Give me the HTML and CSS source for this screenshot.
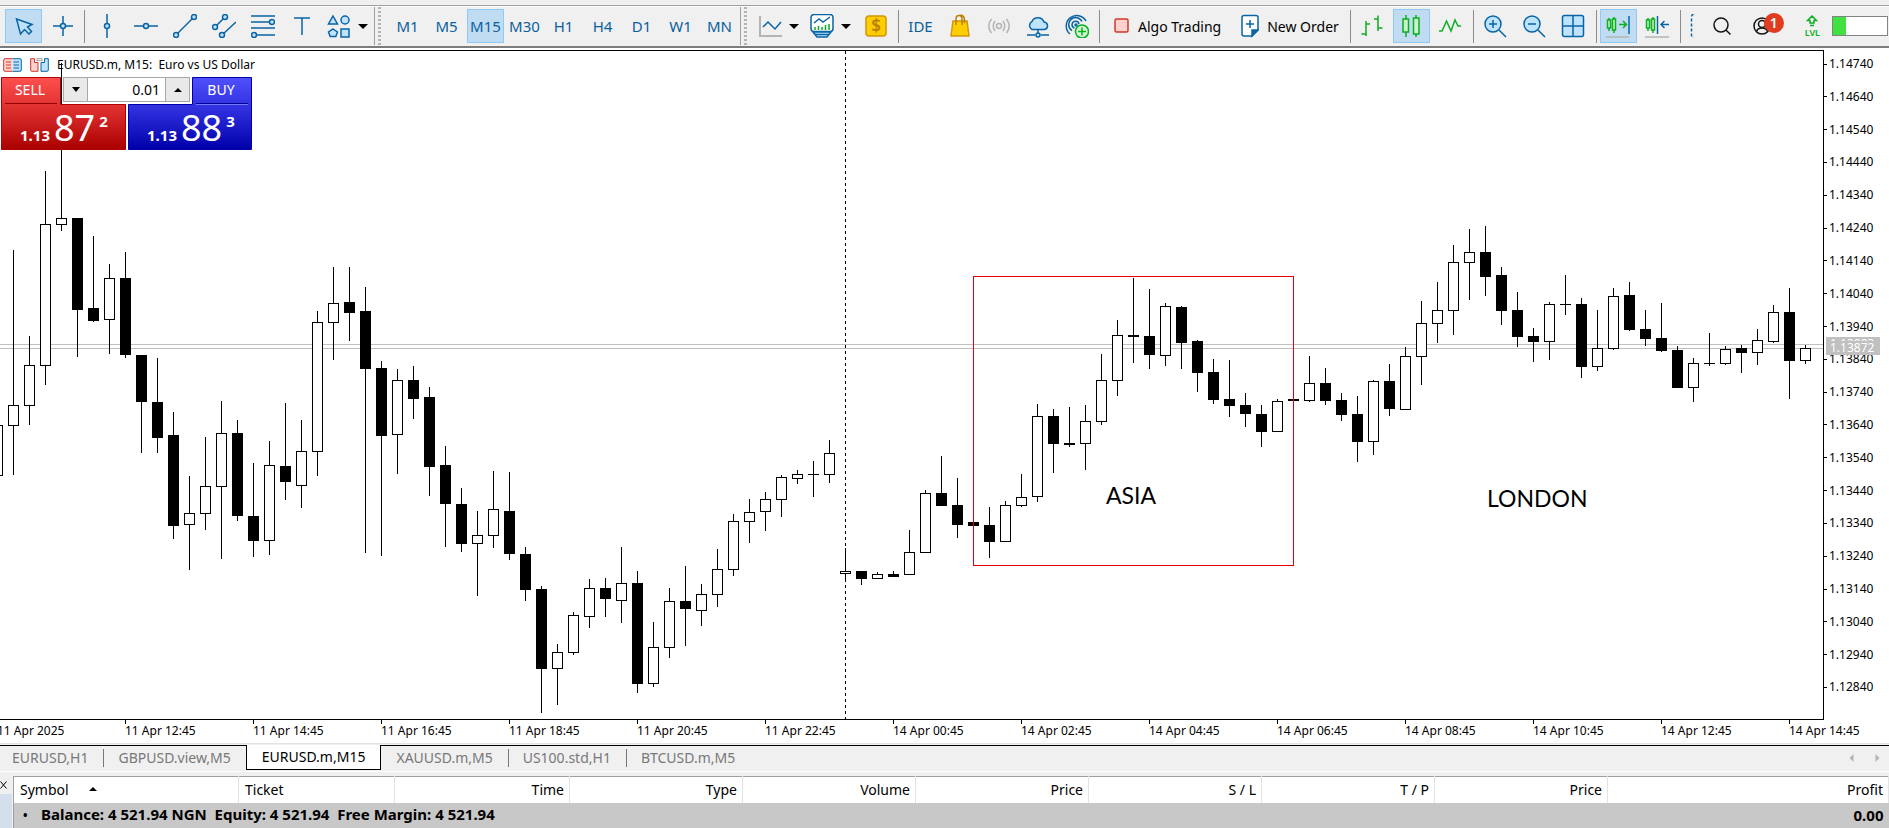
FILE: index.html
```html
<!DOCTYPE html>
<html lang="en">
<head>
  <meta charset="UTF-8">
  <meta name="viewport" content="width=device-width, initial-scale=1">
  <title>EURUSD.m, M15</title>
  <link rel="stylesheet" href="styles.css">
</head>
<body>
  <div class="menu-edge"></div>

  <!-- Toolbar -->
  <header class="toolbar">
    <div class="tool-group">
      <button class="tool active" aria-label="Cursor"><svg width="24" height="24" viewBox="0 0 24 24"><path class="fill" d="M4.500 5 L20 10.500 L15.500 13 L19.500 17.500 L17 20 L12.500 15.500 L8.500 20 Z"/></svg></button>
      <button class="tool" aria-label="Crosshair"><svg width="24" height="24" viewBox="0 0 24 24"><path d="M12 2V22M2 12H22"/><circle class="fill" cx="12" cy="12" r="2.500"/></svg></button>
      <span class="sep"></span>
      <button class="tool" aria-label="Vertical line"><svg width="24" height="24" viewBox="0 0 24 24"><path d="M12 0V24"/><circle class="fill" cx="12" cy="12" r="2.500"/></svg></button>
      <button class="tool" aria-label="Horizontal line"><svg width="24" height="24" viewBox="0 0 24 24"><path d="M0 12H24"/><circle class="fill" cx="12" cy="12" r="2.500"/></svg></button>
      <button class="tool" aria-label="Trend line"><svg width="24" height="24" viewBox="0 0 24 24"><path d="M3 21L21 3"/><circle class="fill" cx="3" cy="21" r="2.500"/><circle class="fill" cx="21" cy="3" r="2.500"/></svg></button>
      <button class="tool" aria-label="Channel"><svg width="24" height="24" viewBox="0 0 24 24"><path d="M3 13L13 3M10 21L24 8"/><circle class="fill" cx="3" cy="13" r="2.500"/><circle class="fill" cx="13" cy="3" r="2.500"/><circle class="fill" cx="10" cy="21" r="2.500"/></svg></button>
      <button class="tool" aria-label="Fibonacci"><svg width="24" height="24" viewBox="0 0 24 24"><path d="M0 2H24M0 8H18M0 14H24M6 21H24"/><circle class="fill" cx="21" cy="8" r="2.500"/><circle class="fill" cx="3" cy="21" r="2.500"/></svg></button>
      <button class="tool" aria-label="Text"><svg width="24" height="24" viewBox="0 0 24 24"><path d="M4 4H20M12 4V21"/></svg></button>
      <button class="tool drop" aria-label="Shapes">
        <svg width="24" height="24" viewBox="0 0 24 24"><path class="fill" d="M6 2L10.500 10H1.500Z"/><circle class="fill" cx="18" cy="6" r="4"/><path class="fill" d="M6 15L10.500 18L8.800 22.500H3.200L1.500 18Z"/><rect class="fill" x="14" y="15" width="8" height="8"/></svg>
        <span class="caret"></span>
      </button>
    </div>

    <div class="tool-group">
      <span class="grip"></span>
      <button class="tool">M1</button>
      <button class="tool">M5</button>
      <button class="tool active">M15</button>
      <button class="tool">M30</button>
      <button class="tool">H1</button>
      <button class="tool">H4</button>
      <button class="tool">D1</button>
      <button class="tool">W1</button>
      <button class="tool">MN</button>
    </div>

    <div class="tool-group last">
      <span class="grip"></span>
      <button class="tool drop" aria-label="Chart type">
        <svg width="24" height="24" viewBox="0 0 24 24"><path class="gray thick" d="M2 2V22H24"/><path d="M5 13L10 8L17 15L23 8"/></svg>
        <span class="caret"></span>
      </button>
      <button class="tool drop" aria-label="Indicators">
        <svg width="24" height="24" viewBox="0 0 24 24"><rect class="white" x="1" y="0.500" width="22" height="17" rx="3"/><path class="fill" d="M3 18H21L17 23H7Z"/><path d="M4 9L9 5L13 8L20 3M5 20.500H19"/><path class="green" d="M5 13V16M8.500 12V16M12 13V16M15.500 11V16M19 10V16"/></svg>
        <span class="caret"></span>
      </button>
      <button class="tool" aria-label="Symbols"><svg width="24" height="24" viewBox="0 0 24 24"><rect class="gold" x="2" y="2" width="20" height="20" rx="3"/><text class="dollar" x="12" y="18">$</text></svg></button>
      <span class="sep"></span>
      <button class="tool">IDE</button>
      <button class="tool" aria-label="Market"><svg width="24" height="24" viewBox="0 0 24 24"><path class="gold" d="M5 7H19L21 22H3Z"/><path class="gold-line" d="M8 11V5Q8 1.500 11 1.500Q14 1.500 14 5V11M11 1.500Q16.500 0.500 16.500 6V9"/></svg></button>
      <button class="tool" aria-label="Signals"><svg width="24" height="24" viewBox="0 0 24 24"><g class="gray"><circle cx="12" cy="12" r="2.500"/><path d="M8 7Q4.500 12 8 17M16 7Q19.500 12 16 17M4.500 5Q-1 12 4.500 19M19.500 5Q25 12 19.500 19"/></g></svg></button>
      <button class="tool" aria-label="VPS"><svg width="24" height="24" viewBox="0 0 24 24"><path class="fill" d="M6 15.500A4.500 4.500 0 0 1 6 7.500A6.500 6.500 0 0 1 18 8A3.800 3.800 0 0 1 18.500 15.500Z"/><path d="M12 16V20M1 21H9M15 21H23"/><circle class="fill" cx="12" cy="21" r="2"/></svg></button>
      <button class="tool" aria-label="Copy trading"><svg width="24" height="24" viewBox="0 0 24 24"><path d="M5 20A10.500 10.500 0 1 1 21 7M7 16.500A7 7 0 1 1 17 7.500M9.500 14A3.500 3.500 0 1 1 14 10"/><circle cx="11" cy="11" r="1"/><circle class="plus" cx="17" cy="17.500" r="6.500"/><path class="green" d="M17 13.500V21.500M13 17.500H21"/></svg></button>
      <span class="sep"></span>
      <button class="tool wide"><svg width="16" height="16" viewBox="0 0 16 16"><rect class="stop" x="1" y="1" width="13" height="13" rx="1.500"/></svg>Algo Trading</button>
      <button class="tool wide"><svg width="18" height="24" viewBox="0 0 18 24"><path class="white" d="M3 1.500H15Q17 1.500 17 3.500V16L11 22H3Q1 22 1 20V3.500Q1 1.500 3 1.500Z"/><path class="solid" d="M11 22V16H17Z"/><path d="M9 6V14M5 10H13"/></svg>New Order</button>
      <span class="sep"></span>
      <button class="tool" aria-label="Bar chart"><svg width="24" height="24" viewBox="0 0 24 24"><path class="green" d="M6 7V22M1.500 20H6M6 10H10M18 1.500V17M14 5H18M18 14H22.500"/></svg></button>
      <button class="tool active" aria-label="Candlesticks"><svg width="24" height="24" viewBox="0 0 24 24"><path class="green" d="M7 1V5M7 18V23M17 1V4M17 20V23"/><path class="green light" d="M4 5H9.500V18H4ZM14.500 4H20V20H14.500Z"/></svg></button>
      <button class="tool" aria-label="Line chart"><svg width="24" height="24" viewBox="0 0 24 24"><path class="green" d="M1 17H4L8.500 7L13 17L17 6L20 12H23"/></svg></button>
      <span class="sep"></span>
      <button class="tool" aria-label="Zoom in"><svg width="24" height="24" viewBox="0 0 24 24"><circle class="fill" cx="10" cy="10" r="8"/><path d="M16 16L23 23M10 6V14M6 10H14"/></svg></button>
      <button class="tool" aria-label="Zoom out"><svg width="24" height="24" viewBox="0 0 24 24"><circle class="fill" cx="10" cy="10" r="8"/><path d="M16 16L23 23M6 10H14"/></svg></button>
      <button class="tool" aria-label="Tile windows"><svg width="24" height="24" viewBox="0 0 24 24"><rect class="fill" x="1.500" y="1.500" width="21" height="21" rx="2"/><path d="M12 2V22M2 12H22"/></svg></button>
      <span class="sep"></span>
      <button class="tool active" aria-label="Auto scroll"><svg width="24" height="24" viewBox="0 0 24 24"><path class="green" d="M3 4V17M8 3V19M13 10.500H20M17 7L20.500 10.500L17 14"/><path class="green light" d="M1.500 6H4.500V14H1.500ZM6.500 5H9.500V16H6.500Z"/><path d="M23 2V20"/><path class="gray" d="M0 23H23"/></svg></button>
      <button class="tool" aria-label="Chart shift"><svg width="24" height="24" viewBox="0 0 24 24"><path class="green" d="M3 4V17M8 3V19"/><path class="green light" d="M1.500 6H4.500V14H1.500ZM6.500 5H9.500V16H6.500Z"/><path d="M12.500 2V20M16 10.500H24M19.500 7L16 10.500L19.500 14"/><path class="gray" d="M0 23H24"/></svg></button>
      <span class="sep"></span>
      <div class="status">
        <svg width="4" height="24" viewBox="0 0 4 24"><path class="dotted" d="M3.500 0.500Q1.500 0.500 1.500 3V21Q1.500 23.500 3.500 23.500"/></svg>
        <button class="tool black" aria-label="Search"><svg width="24" height="24" viewBox="0 0 24 24"><circle cx="11" cy="11" r="7"/><path d="M16 16L20.500 20.500"/></svg></button>
        <button class="tool black account" aria-label="Account"><svg width="24" height="24" viewBox="0 0 24 24"><circle cx="11" cy="12" r="8"/><circle cx="11" cy="10" r="3.500"/><path d="M5.500 17.500Q6.500 14 11 14Q15.500 14 16.500 17.500"/></svg><span class="badge">1</span></button>
        <div class="level"><svg width="12" height="13" viewBox="0 0 12 13"><path class="green" d="M6 1L10.500 5.500H8V8H4V5.500H1.500ZM4 10.500H8"/></svg>LVL</div>
        <div class="battery"><span class="battery-fill"></span></div>
      </div>
    </div>
  </header>

  <!-- Chart -->
  <main class="chart">
    <div class="plot-row">
      <div class="plot">
        <svg class="candles" id="candles" role="img" aria-label="EURUSD.m M15 candles"></svg>

        <div class="chart-title">
          <svg width="19" height="14" viewBox="0 0 19 14"><path class="red-part" d="M9.500 0.700H2Q0.700 0.700 0.700 2V12Q0.700 13.300 2 13.300H9.500"/><path class="blue-part" d="M9.500 0.700H17Q18.300 0.700 18.300 2V12Q18.300 13.300 17 13.300H9.500"/><path class="red-line" d="M3 4H8M3 7H8M3 10H8"/><path class="blue-line" d="M10.500 4H16M10.500 7H16M10.500 10H16"/></svg>
          <svg width="19" height="14" viewBox="0 0 19 14"><path class="red-part" d="M0.700 0.700H4.500V4.500H8V13.300H2Q0.700 13.300 0.700 12Z"/><path class="blue-part" d="M18.300 0.700H14.500V4.500H11V13.300H17Q18.300 13.300 18.300 12Z"/><rect class="gray-part" x="7" y="0.700" width="5" height="2"/></svg>
          <span>EURUSD.m, M15:&nbsp; Euro vs US Dollar</span>
        </div>

        <div class="trade-panel">
          <button class="deal sell">
            <svg width="125" height="73" viewBox="0 0 125 73">
              <defs><linearGradient id="sellFill" x1="0" y1="0" x2="0" y2="1"><stop offset="0" stop-color="#ff5050"/><stop offset="0.500" stop-color="#d92a2a"/><stop offset="1" stop-color="#aa0000"/></linearGradient></defs>
              <path d="M0.500 0.500H59.500V27.500H124.500V72.500H0.500Z" fill="url(#sellFill)" stroke="#b00000"/>
              <path d="M4 26.500H56" stroke="#960000"/>
            </svg>
            <span class="side">SELL</span>
            <span class="quote"><b>1.13</b><span class="big">87</span><b class="pip">2</b></span>
          </button>
          <button class="deal buy">
            <svg width="124" height="73" viewBox="0 0 124 73">
              <defs><linearGradient id="buyFill" x1="0" y1="0" x2="0" y2="1"><stop offset="0" stop-color="#5050ff"/><stop offset="0.500" stop-color="#2a2ad9"/><stop offset="1" stop-color="#0000aa"/></linearGradient></defs>
              <path d="M64.500 0.500H123.500V72.500H0.500V27.500H64.500Z" fill="url(#buyFill)" stroke="#0000a8"/>
              <path d="M68 26.500H120" stroke="#000096"/><path d="M68 27.500H120" stroke="#7878ff"/>
            </svg>
            <span class="side">BUY</span>
            <span class="quote"><b>1.13</b><span class="big">88</span><b class="pip">3</b></span>
          </button>
          <div class="volume">
            <button aria-label="Decrease volume"><span class="caret"></span></button>
            <input type="text" value="0.01" aria-label="Volume">
            <button aria-label="Increase volume"><span class="caret up"></span></button>
          </div>
        </div>
      </div>

      <div class="price-axis">
        <ul class="prices" id="prices"></ul>
        <span class="price-tag ask">1.13883</span>
        <span class="price-tag bid">1.13872</span>
      </div>
    </div>
    <ul class="time-axis" id="times"></ul>
  </main>

  <nav class="chart-tabs">
    <a href="#">EURUSD,H1</a>
    <a href="#">GBPUSD.view,M5</a>
    <a href="#" class="current">EURUSD.m,M15</a>
    <a href="#">XAUUSD.m,M5</a>
    <a href="#">US100.std,H1</a>
    <a href="#">BTCUSD.m,M5</a>
    <div class="tab-scroll">
      <button aria-label="Scroll left"><svg width="5" height="8" viewBox="0 0 5 8"><path d="M4.500 0V8L0.500 4Z"/></svg></button>
      <button aria-label="Scroll right"><svg width="5" height="8" viewBox="0 0 5 8"><path d="M0.500 0V8L4.500 4Z"/></svg></button>
    </div>
  </nav>

  <!-- Toolbox -->
  <section class="toolbox">
    <div class="toolbox-side">
      <button class="close" aria-label="Close"><svg width="8" height="8" viewBox="0 0 8 8"><path d="M0.500 0.500L6.500 7.500M6.500 0.500L0.500 7.500"/></svg></button>
      <div class="side-strip"></div>
    </div>
    <table class="trades">
      <colgroup>
        <col class="c-symbol"><col class="c-ticket"><col class="c-time"><col class="c-num"><col class="c-num"><col class="c-num"><col class="c-num"><col class="c-num"><col class="c-num"><col>
      </colgroup>
      <thead>
        <tr>
          <th class="left">Symbol<span class="caret up"></span></th>
          <th class="left">Ticket</th>
          <th>Time</th>
          <th>Type</th>
          <th>Volume</th>
          <th>Price</th>
          <th>S / L</th>
          <th>T / P</th>
          <th>Price</th>
          <th>Profit</th>
        </tr>
      </thead>
      <tbody>
        <tr>
          <td class="left" colspan="9"><span class="bullet">•</span>Balance: 4 521.94 NGN&nbsp; Equity: 4 521.94&nbsp; Free Margin: 4 521.94</td>
          <td>0.00</td>
        </tr>
      </tbody>
    </table>
  </section>

  <script src="chart.js"></script>
</body>
</html>
```

FILE: styles.css
```css
* {
  margin: 0;
  padding: 0;
  box-sizing: border-box;
}

body {
  font-family: "Noto Sans", "Open Sans", sans-serif;
  font-size: 14px;
  min-height: 100vh;
  display: flex;
  flex-direction: column;
  overflow: hidden;
  background: #f0f0f0;
  color: #000;
}

button {
  font: inherit;
  color: inherit;
  background: none;
  border: none;
}

ul {
  list-style: none;
}

.menu-edge {
  height: 6px;
  border-bottom: 1px solid #a0a0a0;
}

/* Toolbar */
.toolbar {
  display: flex;
  height: 42px;
  padding-bottom: 1px;
  border-top: 1px solid #fff;
  border-bottom: 2px solid #7c7c7c;
  overflow: hidden;
}

.tool-group {
  display: flex;
  align-items: center;
  gap: 2px;
  padding: 0 2px 0 5px;
  border-right: 1px solid #a0a0a0;
}
.tool-group + .tool-group {
  padding-left: 3px;
}
.tool-group.last {
  flex: 1;
  padding-right: 0;
  border-right: none;
}

.grip {
  width: 3px;
  height: 38px;
  margin-right: 6px;
  background: repeating-linear-gradient(#b4b4b4 0 2px, #f0f0f0 2px 4px);
}
.last .grip {
  margin-right: 4px;
}

.sep {
  width: 1px;
  height: 33px;
  margin: 0 1px;
  background: #8c8c8c;
}
.last .sep {
  margin: 0 1px 0 2px;
}

.tool {
  display: flex;
  flex: none;
  align-items: center;
  justify-content: center;
  width: 37px;
  height: 34px;
  border: 1px solid transparent;
  color: #0a5f9e;
  font-size: 15px;
}
.tool.active {
  background: #c0dcf3;
  border-color: #90c8f6;
}
.tool.drop {
  width: 50px;
  gap: 7px;
}
.tool.wide {
  width: auto;
  gap: 8px;
  padding: 0 6px 0 10px;
  color: #000;
  font-size: 14px;
}

.tool svg,
.level svg {
  fill: none;
  stroke: #0a64a4;
  stroke-width: 1.5;
}
.tool svg .fill { fill: #bde3ff; }
.tool svg .white { fill: #fff; }
.tool svg .solid { fill: #0a64a4; }
.tool svg .gray { stroke: #b4b4b4; }
.tool svg .thick { stroke-width: 2; }
.tool svg .green,
.level svg .green { stroke: #0aaf23; }
.tool svg .light { fill: #c8f5c8; }
.tool svg .plus { fill: #d2fad2; stroke: #0aaf23; }
.tool svg .gold { fill: #ffcd00; stroke: #d2960a; }
.tool svg .gold-line { stroke: #b97d00; }
.tool svg .stop { fill: #ffd2cd; stroke: #d2372d; }
.tool svg .dollar {
  fill: #b97d00;
  stroke: none;
  font-size: 17px;
  font-weight: 600;
  text-anchor: middle;
}
.tool.black svg { stroke: #141414; }

.caret {
  display: inline-block;
  border: 5px solid transparent;
  border-top-color: #000;
  border-bottom: none;
}
.caret.up {
  border: 4px solid transparent;
  border-bottom-color: #000;
  border-top: none;
}

.status {
  display: flex;
  align-items: center;
  flex: 1;
  gap: 2px;
  padding-left: 6px;
}
.dotted {
  fill: none;
  stroke: #0a64a4;
  stroke-width: 1.5;
  stroke-dasharray: 3 2;
}
.status .tool {
  margin-left: 8px;
}
.status .account {
  position: relative;
  margin-left: 2px;
}
.badge {
  position: absolute;
  top: 3px;
  right: -3px;
  width: 20px;
  height: 20px;
  border-radius: 50%;
  background: #e03c20;
  color: #fff;
  font-size: 14px;
  font-weight: 600;
  line-height: 20px;
}
.level {
  display: flex;
  flex-direction: column;
  align-items: center;
  margin-left: auto;
  color: #0aaf23;
  font-size: 9px;
  font-weight: 600;
  line-height: 10px;
}
.battery {
  width: 56px;
  height: 20px;
  margin: 0 1px 0 10px;
  border: 1px solid #828282;
  background: #fff;
}
.battery-fill {
  display: block;
  width: 24%;
  height: 100%;
  background: #41e141;
}

/* Chart */
.chart {
  flex: 1;
  display: flex;
  flex-direction: column;
  padding-top: 2px;
  background: #fff;
  border-bottom: 1px solid #e3e3e3;
  overflow: hidden;
}

.plot-row {
  display: flex;
  flex: 1;
}
.plot {
  position: relative;
  flex: 1;
  border: solid #000;
  border-width: 1px 1px 1px 0;
}
.candles {
  position: absolute;
  inset: 0;
  width: 100%;
  height: 100%;
  shape-rendering: crispEdges;
}
.candles .quote-line { stroke: #c0c0c0; }
.candles .day-line { stroke: #000; stroke-dasharray: 3 3; }
.candles .wick,
.candles .bear { fill: #000; }
.candles .bull { fill: #fff; stroke: #000; }
.candles .session { fill: none; stroke: #e60000; }
.candles .note {
  font-family: Lato, "Noto Sans", sans-serif;
  font-size: 23px;
}

.chart-title {
  position: relative;
  display: flex;
  align-items: center;
  gap: 8px;
  padding: 4px 3px;
  font-size: 12px;
  line-height: 19px;
}
.red-part { fill: #ffd2cd; stroke: #d2372d; }
.blue-part { fill: #bde3ff; stroke: #0a64a4; }
.gray-part { fill: #fff; stroke: #a0a0a0; }
.red-line { stroke: #d2372d; }
.blue-line { stroke: #0a64a4; }

.trade-panel {
  position: absolute;
  top: 26px;
  left: 1px;
  display: flex;
  gap: 2px;
}
.deal {
  position: relative;
  height: 73px;
  color: #fff;
}
.deal svg {
  display: block;
}
.side {
  position: absolute;
  top: 3px;
  left: 0;
  width: 58px;
  font-size: 14px;
  line-height: 20px;
}
.buy .side {
  left: auto;
  right: 2px;
}
.quote {
  position: absolute;
  bottom: 8px;
  left: 19px;
  display: flex;
  align-items: flex-end;
  gap: 4px;
  font-size: 15px;
  line-height: 14px;
}
.big {
  font-size: 36px;
  line-height: 28px;
}
.pip {
  align-self: flex-start;
}

.volume {
  position: absolute;
  top: 0;
  left: 62px;
  display: flex;
  width: 127px;
  height: 25px;
  border: 1px solid #a8a8a8;
}
.volume button {
  width: 23px;
  background: #e9e9e9;
  line-height: 0;
}
.volume button .caret {
  border-left-width: 4px;
  border-right-width: 4px;
  vertical-align: middle;
}
.volume input {
  flex: 1;
  min-width: 0;
  padding-right: 5px;
  border: solid #a8a8a8;
  border-width: 0 1px;
  font: inherit;
  text-align: right;
}

.price-axis {
  position: relative;
  width: 65px;
  font-size: 12px;
}
.prices {
  display: flex;
  flex-direction: column;
  justify-content: space-between;
  height: 100%;
  padding: 6px 0 24px;
}
.prices li {
  display: flex;
  align-items: center;
  gap: 2px;
  line-height: 16px;
}
.prices li::before {
  content: "";
  width: 3px;
  height: 1px;
  background: #000;
}
.price-tag {
  position: absolute;
  left: 2px;
  width: 54px;
  height: 14px;
  padding-left: 4px;
  background: #c0c0c0;
  color: #fff;
  line-height: 14px;
}
.price-tag.ask { top: 287px; }
.price-tag.bid { top: 291px; }

.time-axis {
  display: flex;
  height: 23px;
  margin-left: -3px;
  font-size: 12px;
}
.time-axis li {
  flex: none;
  width: 128px;
  line-height: 21px;
  white-space: nowrap;
}
.time-axis li::before {
  content: "";
  position: absolute;
  width: 1px;
  height: 4px;
  background: #000;
}

/* Chart tabs */
.chart-tabs {
  display: flex;
  height: 25px;
  margin-top: 1px;
  border-top: 1px solid #000;
  color: #787878;
  line-height: 23px;
}
.chart-tabs a {
  padding: 0 15px;
  color: inherit;
  text-decoration: none;
}
.chart-tabs a:first-child {
  padding-left: 12px;
}
.chart-tabs a + a:not(.current) {
  background: linear-gradient(#787878, #787878) left center / 1px 18px no-repeat;
}
.chart-tabs .current + a:not(.current) {
  background: none;
}
.chart-tabs .current {
  margin-top: -1px;
  background: #fff;
  border: solid #000;
  border-width: 0 1px 1px;
  color: #000;
}
.tab-scroll {
  display: flex;
  gap: 21px;
  margin-left: auto;
  padding-right: 9px;
}
.tab-scroll svg {
  display: block;
  fill: #b4b4b4;
}

/* Toolbox */
.toolbox {
  display: flex;
  margin-top: 1px;
  padding-top: 4px;
  border-top: 1px solid #fff;
}
.toolbox-side {
  display: flex;
  flex-direction: column;
  width: 13px;
}
.close {
  width: 8px;
  height: 18px;
}
.close svg {
  display: block;
  stroke: #000;
  fill: none;
}
.side-strip {
  flex: 1;
  width: 12px;
  background: #d3dfec;
}

.trades {
  flex: 1;
  table-layout: fixed;
  border-collapse: collapse;
  border: solid #a0a0a0;
  border-width: 1px 0 0 1px;
  background: #fff;
}
.c-symbol { width: 225px; }
.c-ticket { width: 156px; }
.c-time { width: 175px; }
.c-num { width: 173px; }
.trades th,
.trades td {
  padding: 0 5px 0 6px;
  text-align: right;
}
.trades th {
  height: 27px;
  border-right: 1px solid #e3e3e3;
  font-weight: 400;
}
.trades td {
  height: 25px;
  padding-bottom: 2px;
  background: #c8c8c8;
  font-size: 15px;
  font-weight: 700;
  line-height: 20px;
}
.trades .left {
  text-align: left;
}
.trades .caret {
  margin: 0 0 4px 20px;
}
.bullet {
  display: inline-block;
  width: 21px;
  padding-left: 3px;
  font-size: 12px;
}
```

FILE: chart.js
```js
// Each candle: [high, body top, body bottom, low, bullish]
const candles = [
  [425, 425, 476, 476, 1], [250, 405, 426, 475, 1], [336, 365, 406, 425, 1], [171, 224, 366, 385, 1],
  [63, 218, 225, 231, 1], [218, 218, 310, 357, 0], [236, 308, 321, 322, 0], [264, 278, 320, 354, 1],
  [252, 278, 355, 358, 0], [355, 355, 402, 453, 0], [358, 402, 438, 453, 0], [412, 435, 526, 539, 0],
  [476, 513, 525, 570, 1], [437, 486, 514, 530, 1], [401, 433, 487, 559, 1], [420, 433, 516, 521, 0],
  [463, 516, 541, 557, 0], [441, 465, 541, 555, 1], [403, 466, 482, 500, 0], [420, 451, 486, 508, 1],
  [311, 322, 452, 476, 1], [267, 303, 323, 360, 1], [267, 302, 313, 341, 0], [287, 311, 369, 553, 0],
  [361, 368, 436, 556, 0], [369, 380, 435, 474, 1], [366, 380, 399, 419, 0], [387, 397, 467, 496, 0],
  [446, 465, 504, 547, 0], [488, 504, 544, 552, 0], [511, 535, 544, 596, 1], [471, 509, 536, 548, 1],
  [472, 511, 554, 560, 0], [547, 554, 590, 601, 0], [586, 589, 669, 713, 0], [644, 652, 669, 705, 1],
  [612, 615, 653, 655, 1], [579, 588, 617, 628, 1], [578, 588, 599, 617, 0], [547, 583, 601, 623, 1],
  [571, 583, 684, 693, 0], [622, 647, 684, 687, 1], [588, 601, 648, 658, 1], [566, 601, 609, 646, 0],
  [584, 594, 611, 626, 1], [549, 569, 595, 607, 1], [514, 521, 570, 576, 1], [499, 512, 522, 543, 1],
  [492, 499, 512, 531, 1], [475, 477, 500, 517, 1], [470, 474, 479, 484, 1], [461, 474, 475, 497, 0],
  [440, 453, 475, 483, 1], [548, 571, 574, 580, 1], [571, 571, 579, 585, 0], [572, 574, 579, 579, 1],
  [571, 574, 577, 577, 0], [530, 552, 575, 575, 1], [490, 493, 553, 553, 1], [456, 493, 506, 506, 0],
  [478, 505, 525, 538, 0], [522, 522, 526, 526, 0], [507, 525, 542, 558, 0], [501, 505, 542, 542, 1],
  [474, 497, 506, 507, 1], [404, 416, 497, 502, 1], [409, 416, 444, 473, 0], [407, 443, 445, 447, 0],
  [405, 421, 444, 470, 1], [354, 380, 422, 425, 1], [320, 335, 381, 396, 1], [278, 335, 337, 363, 0],
  [289, 336, 355, 369, 0], [303, 306, 356, 366, 1], [306, 307, 343, 369, 0], [340, 341, 373, 392, 0],
  [359, 372, 400, 404, 0], [360, 399, 406, 417, 0], [393, 405, 414, 427, 0], [405, 414, 432, 447, 0],
  [399, 401, 432, 432, 1], [399, 399, 401, 401, 0], [356, 383, 401, 402, 1], [368, 383, 401, 405, 0],
  [393, 400, 415, 421, 0], [396, 414, 442, 462, 0], [380, 381, 442, 455, 1], [364, 381, 409, 416, 0],
  [347, 356, 410, 410, 1], [301, 323, 357, 385, 1], [282, 310, 324, 343, 1], [245, 262, 311, 335, 1],
  [229, 252, 263, 300, 1], [226, 252, 277, 296, 0], [267, 275, 311, 325, 0], [292, 310, 337, 347, 0],
  [328, 336, 342, 362, 0], [302, 304, 342, 360, 1], [275, 304, 305, 315, 0], [298, 304, 367, 378, 0],
  [310, 348, 367, 371, 1], [288, 296, 349, 350, 1], [282, 295, 330, 331, 0], [310, 329, 339, 346, 0],
  [303, 338, 351, 352, 0], [346, 350, 388, 388, 0], [358, 363, 388, 402, 1], [333, 363, 364, 366, 0],
  [346, 349, 364, 365, 1], [345, 348, 353, 373, 0], [329, 340, 353, 365, 1], [305, 312, 342, 343, 1],
  [288, 312, 361, 399, 0], [345, 348, 361, 364, 1]
];

const TOP = 51;       // y of the plot's first row
const FIRST_X = -3;   // centre of the first candle
const STEP = 16;
const BODY = 11;

const svg = document.getElementById('candles');

function add(tag, attrs, text) {
  const el = document.createElementNS('http://www.w3.org/2000/svg', tag);
  for (const key in attrs) el.setAttribute(key, attrs[key]);
  if (text) el.textContent = text;
  svg.appendChild(el);
}

// Ask and bid lines, day separator
[344, 348].forEach(y => {
  add('line', { class: 'quote-line', x1: 0, x2: '100%', y1: y - TOP + 0.5, y2: y - TOP + 0.5 });
});
add('line', { class: 'day-line', x1: 845.5, x2: 845.5, y1: 0, y2: '100%' });

candles.forEach(([high, top, bottom, low, bull], i) => {
  const x = FIRST_X + i * STEP;
  const left = x - (BODY - 1) / 2;
  add('rect', { class: 'wick', x: x, y: high - TOP, width: 1, height: low - high });
  if (bull) {
    add('rect', { class: 'bull', x: left + 0.5, y: top - TOP + 0.5, width: BODY - 1, height: bottom - top - 1 });
  } else {
    add('rect', { class: 'bear', x: left, y: top - TOP, width: BODY, height: bottom - top });
  }
});

// Session marks
add('rect', { class: 'session', x: 973.5, y: 276 - TOP + 0.5, width: 320, height: 289 });
add('text', { class: 'note', x: 1106, y: 504 - TOP }, 'ASIA');
add('text', { class: 'note', x: 1487, y: 507 - TOP }, 'LONDON');

// Price scale
const prices = document.getElementById('prices');
for (let p = 114740; p >= 112840; p -= 100) {
  const li = document.createElement('li');
  li.textContent = (p / 100000).toFixed(5);
  prices.appendChild(li);
}

// Time scale
const times = document.getElementById('times');
['11 Apr 2025', '11 Apr 12:45', '11 Apr 14:45', '11 Apr 16:45', '11 Apr 18:45', '11 Apr 20:45',
  '11 Apr 22:45', '14 Apr 00:45', '14 Apr 02:45', '14 Apr 04:45', '14 Apr 06:45', '14 Apr 08:45',
  '14 Apr 10:45', '14 Apr 12:45', '14 Apr 14:45'].forEach(t => {
  const li = document.createElement('li');
  li.textContent = t;
  times.appendChild(li);
});
```
